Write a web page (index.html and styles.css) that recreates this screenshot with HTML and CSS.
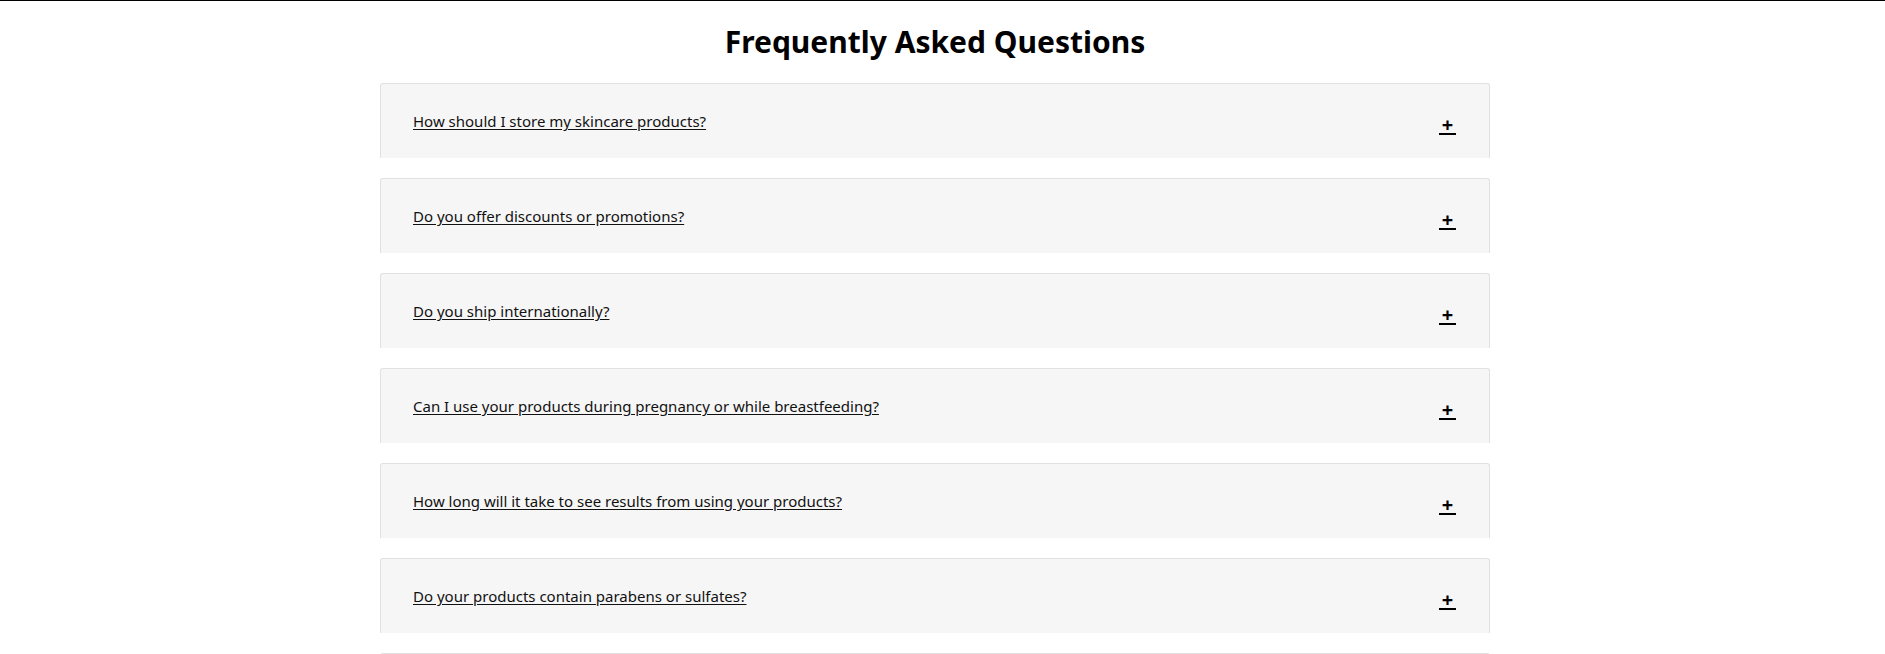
FILE: index.html
```html
<!DOCTYPE html>
<html lang="en">
<head>
<meta charset="utf-8">
<title>FAQ</title>
<link rel="stylesheet" href="styles.css">
</head>
<body>
<div class="page">
  <section class="faq">
    <h2 class="faq-title">Frequently Asked Questions</h2>
    <div class="faq-list">
      <div class="faq-item"><a class="faq-q" href="#">How should I store my skincare products?</a><a class="faq-toggle" href="#">+</a></div>
      <div class="faq-item"><a class="faq-q" href="#">Do you offer discounts or promotions?</a><a class="faq-toggle" href="#">+</a></div>
      <div class="faq-item"><a class="faq-q" href="#">Do you ship internationally?</a><a class="faq-toggle" href="#">+</a></div>
      <div class="faq-item"><a class="faq-q" href="#">Can I use your products during pregnancy or while breastfeeding?</a><a class="faq-toggle" href="#">+</a></div>
      <div class="faq-item"><a class="faq-q" href="#">How long will it take to see results from using your products?</a><a class="faq-toggle" href="#">+</a></div>
      <div class="faq-item"><a class="faq-q" href="#">Do your products contain parabens or sulfates?</a><a class="faq-toggle" href="#">+</a></div>
      <div class="faq-item faq-item-next"></div>
    </div>
  </section>
</div>
</body>
</html>
```
FILE: styles.css
```css
html, body {
  margin: 0;
  padding: 0;
  background: #fff;
}
body {
  font-family: "Noto Sans", "Open Sans", sans-serif;
  color: #000;
  border-top: 1px solid #000;
  height: 653px;
  overflow: hidden;
}
.page {
  padding-right: 15px;
}
.faq {
  width: 1110px;
  margin: 0 auto;
}
.faq-title {
  margin: 0;
  padding-top: 22px;
  height: 82px;
  box-sizing: border-box;
  font-size: 30px;
  font-weight: 700;
  line-height: 38px;
  text-align: center;
}
.faq-list {
  display: flex;
  flex-direction: column;
  gap: 20px;
}
.faq-item {
  display: flex;
  align-items: center;
  justify-content: space-between;
  height: 75px;
  flex-shrink: 0;
  box-sizing: border-box;
  padding: 0 33px 0 32px;
  background: #f6f6f6;
  border: 1px solid #e1e1e1;
  border-bottom: none;
  border-radius: 3px 3px 0 0;
}
.faq-q {
  color: #111;
  font-size: 15px;
  text-decoration: underline;
  text-underline-offset: 2px;
}
.faq-toggle {
  display: inline-block;
  width: 17px;
  margin-top: 9px;
  padding-bottom: 1px;
  border-bottom: 2px solid #000;
  color: #000;
  font-size: 20px;
  font-weight: 700;
  line-height: 15px;
  text-align: center;
  text-decoration: none;
}
```
